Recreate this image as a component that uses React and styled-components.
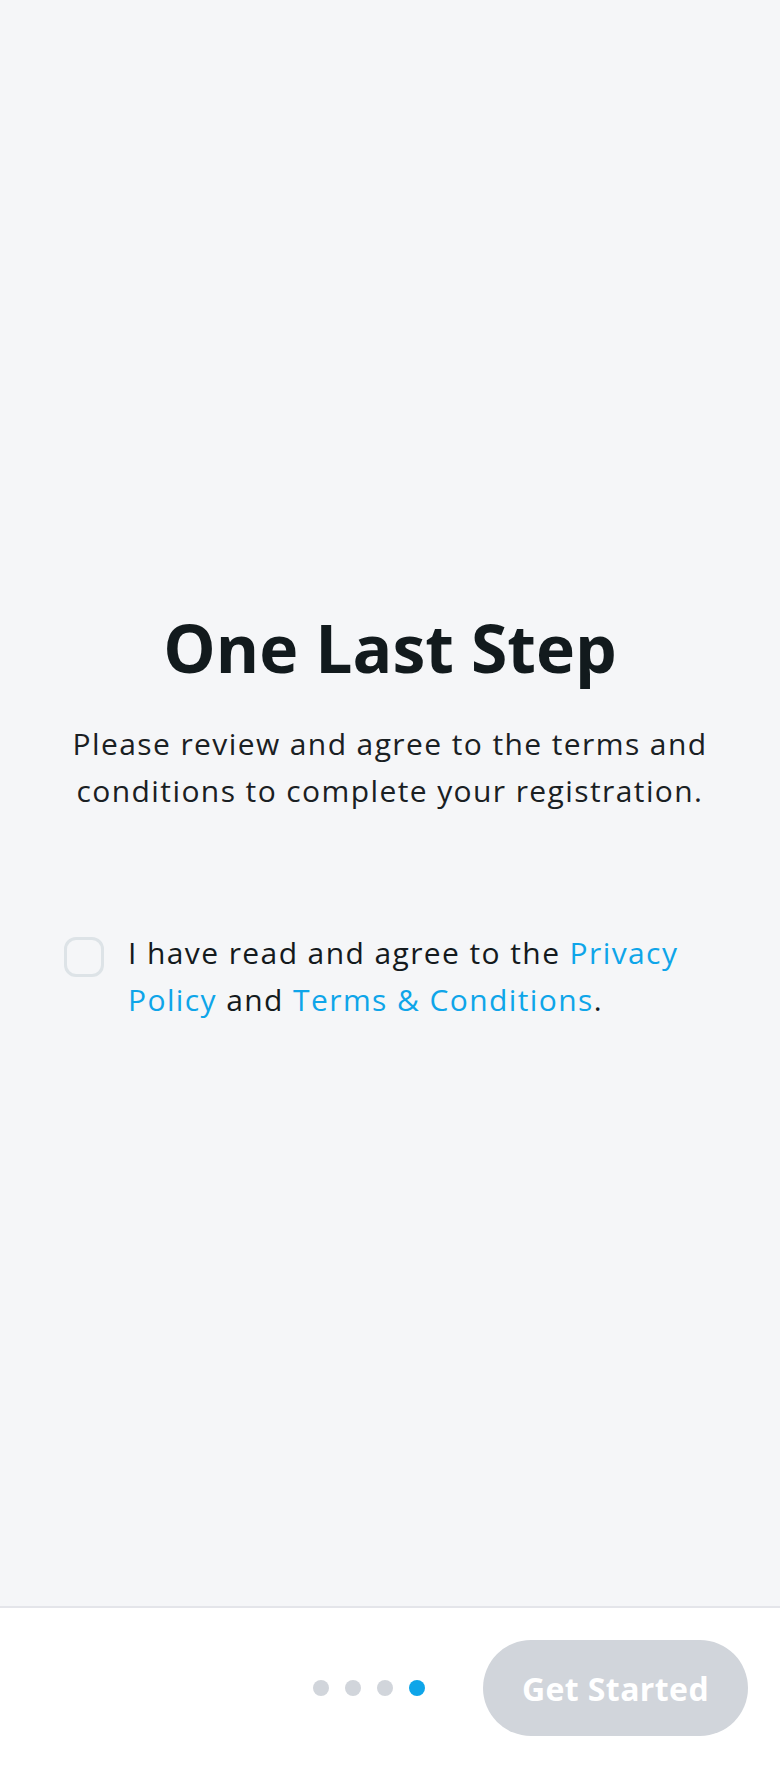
import React, { useState } from "react";
import styled, { createGlobalStyle } from "styled-components";

const GlobalStyle = createGlobalStyle`
  html, body {
    margin: 0;
    padding: 0;
    background: #f5f6f8;
  }
  body {
    font-family: "Open Sans", "Noto Sans", sans-serif;
  }
  * {
    box-sizing: border-box;
  }
`;

function App() {
  const [agreed, setAgreed] = useState(false);
  const steps = [0, 1, 2, 3];
  const current = 3;

  return (
    <>
      <GlobalStyle />
      <Page>
        <Main>
          <Title>One Last Step</Title>
          <Lead>
            Please review and agree to the terms and conditions to complete
            your registration.
          </Lead>
          <AgreeRow>
            <Box
              type="button"
              checked={agreed}
              onClick={() => setAgreed(!agreed)}
              aria-label="Agree"
            />
            <AgreeText>
              I have read and agree to the <Link>Privacy Policy</Link> and{" "}
              <Link>Terms &amp; Conditions</Link>.
            </AgreeText>
          </AgreeRow>
        </Main>
        <Footer>
          <Dots>
            {steps.map((s) => (
              <Dot key={s} active={s === current} />
            ))}
          </Dots>
          <StartButton disabled={!agreed}>Get Started</StartButton>
        </Footer>
      </Page>
    </>
  );
}

export default App;

const Page = styled.div`
  min-height: 100vh;
  display: flex;
  flex-direction: column;
`;
const Main = styled.main`
  flex: 1;
  display: flex;
  flex-direction: column;
  justify-content: center;
  align-items: center;
  padding: 24px 60px 0;
  border-bottom: 2px solid #e4e5ea;
`;
const Title = styled.h1`
  margin: 0;
  font-size: 66px;
  line-height: 80px;
  font-weight: 700;
  color: #121a1d;
`;
const Lead = styled.p`
  margin: 33px 0 0;
  text-align: center;
  font-size: 30px;
  line-height: 47px;
  letter-spacing: 1.4px;
  color: #1a2023;
`;
const AgreeRow = styled.div`
  align-self: stretch;
  display: flex;
  align-items: flex-start;
  gap: 24px;
  margin-top: 121px;
  padding-left: 4px;
`;
const Box = styled.button`
  flex: 0 0 40px;
  width: 40px;
  height: 40px;
  margin-top: 2px;
  padding: 0;
  border-radius: 12px;
  border: 3px solid #dde3e7;
  background: ${(p) => (p.checked ? "#0ea5e9" : "transparent")};
  cursor: pointer;
`;
const AgreeText = styled.p`
  margin: -6px 0 0;
  font-size: 30px;
  line-height: 47px;
  letter-spacing: 1.4px;
  color: #141a1d;
`;
const Link = styled.a`
  color: #0ea5e9;
  cursor: pointer;
`;
const Footer = styled.footer`
  height: 160px;
  background: #ffffff;
  display: flex;
  align-items: center;
  justify-content: flex-end;
  gap: 58px;
  padding: 0 32px;
`;
const Dots = styled.div`
  display: flex;
  gap: 16px;
`;
const Dot = styled.span`
  width: 16px;
  height: 16px;
  border-radius: 50%;
  background: ${(p) => (p.active ? "#0ea5e9" : "#d1d5db")};
`;
const StartButton = styled.button`
  width: 265px;
  height: 96px;
  border: none;
  border-radius: 48px;
  background: ${(p) => (p.disabled ? "#d1d5db" : "#0ea5e9")};
  color: #ffffff;
  font-family: "Open Sans", "Noto Sans", sans-serif;
  font-size: 32px;
  font-weight: 700;
  letter-spacing: 0.4px;
  cursor: pointer;
`;
